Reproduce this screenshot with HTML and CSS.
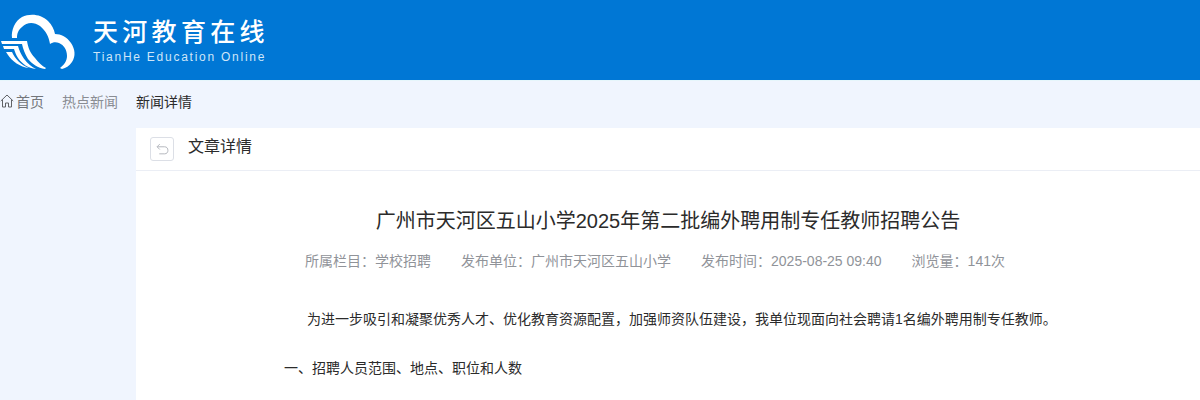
FILE: index.html
```html
<!DOCTYPE html>
<html lang="zh-CN">
<head>
    <meta charset="UTF-8">
    <title>新闻详情</title>
    <link rel="stylesheet" href="styles.css">
</head>
<body>
    <header class="site-header">
        <div class="logo">
            <svg class="logo-mark" width="76" height="64" viewBox="0 10 76 64">
                <path fill="#fff" d="M12 38C11 30 15 21 22 17C30 13 41 14 48 21C52 25 54 29 55 34C61 34 67 37 71 43C75 49 76 56 72 62C69 66 66 68 62 69L60 68C64 65 67 61 67 56C67 50 64 45 59 43C56 42 53 42 50 44C49 37 46 31 40 26C34 22 27 22 22 27C18 30 17 34 17 38Z"/>
                <path fill="#fff" d="M1 41H27C28 47 30 53 35 58C38 62 42 66 46 68L45 69C38 68 32 64 28 59C25 54 23 49 22 44H2Z"/>
                <path fill="#fff" d="M3 46H18C20 54 26 64 36 69C28 68 22 64 18 58C16 55 15 52 14 49H4Z"/>
                <path fill="#fff" d="M6 52H12C15 59 21 65 29 68C20 67 12 61 8 55Z"/>
            </svg>
            <div class="logo-text">
                <div class="logo-cn">天河教育在线</div>
                <div class="logo-en">TianHe Education Online</div>
            </div>
        </div>
    </header>

    <nav class="crumbs">
        <svg class="home-icon" width="14" height="14" viewBox="0 0 14 14">
            <path fill="none" stroke="#606266" stroke-width="1" d="M0.8 7L7 1L13.2 7M2.5 5.5V13H5.5V9H8.5V13H11.5V5.5"/>
        </svg>
        <span class="crumb first">首页</span>
        <span class="crumb">热点新闻</span>
        <span class="crumb current">新闻详情</span>
    </nav>

    <div class="page">
        <main class="panel">
            <div class="panel-head">
                <button class="back-btn">
                    <svg width="13" height="13" viewBox="0 0 12 12">
                        <path fill="none" stroke="#b4b7bd" stroke-width="0.9" d="M3.5 1L1 3.5L3.5 6M1 3.5H8C10 3.5 11 5 11 6.8C11 8.6 10 10 8 10H3"/>
                    </svg>
                </button>
                <span class="panel-title">文章详情</span>
            </div>
            <article class="article">
                <h1 class="article-title">广州市天河区五山小学2025年第二批编外聘用制专任教师招聘公告</h1>
                <div class="meta">
                    <span>所属栏目：学校招聘</span>
                    <span>发布单位：广州市天河区五山小学</span>
                    <span>发布时间：2025-08-25 09:40</span>
                    <span>浏览量：141次</span>
                </div>
                <div class="article-body">
                    <p class="intro">为进一步吸引和凝聚优秀人才、优化教育资源配置，加强师资队伍建设，我单位现面向社会聘请1名编外聘用制专任教师。</p>
                    <p class="section">一、招聘人员范围、地点、职位和人数</p>
                </div>
            </article>
        </main>
    </div>
</body>
</html>
```

FILE: styles.css
```css
/* 基础 */
html, body { height: 100%; overflow: hidden; }
body {
    margin: 0;
    background: #f0f5fe;
    font-family: "Liberation Sans", "Noto Sans CJK SC", sans-serif;
    color: #2b2b2b;
}

/* 顶部 */
.site-header {
    height: 81px;
    background: #0077d5;
    border-bottom: 1px solid #e6f6fb;
    box-sizing: border-box;
}

.logo {
    display: flex;
    align-items: center;
    height: 80px;
}

.logo-mark { margin: 4px 17px 0 0; flex: none; }

.logo-text { color: #fff; }

.logo-cn {
    font-size: 25px;
    line-height: 32px;
    letter-spacing: 4.3px;
    font-weight: 500;
}

.logo-en {
    margin-top: 2px;
    font-size: 12px;
    line-height: 14px;
    letter-spacing: 1.75px;
    color: #cfe6f8;
}

/* 面包屑 */
.crumbs {
    display: flex;
    align-items: center;
    height: 40px;
    padding-bottom: 7px;
    font-size: 14px;
}

.home-icon { flex: none; margin-right: 2px; }

.crumb { color: #8a8d93; margin-right: 18px; }
.crumb.first { color: #73767a; }
.crumb.current { color: #2b2b2b; }

/* 内容 */
.page { padding-left: 136px; }

.panel { background: #fff; min-height: 272px; }

.panel-head {
    display: flex;
    align-items: center;
    height: 42px;
    padding-left: 14px;
    border-bottom: 1px solid #ebeef5;
}

.back-btn {
    display: flex;
    align-items: center;
    justify-content: center;
    width: 24px;
    height: 24px;
    padding: 0;
    background: #fff;
    border: 1px solid #dcdfe6;
    border-radius: 3px;
}

.panel-title {
    margin: 0 0 8px 14px;
    font-size: 16px;
}

.article { padding-top: 36px; }

.article-title {
    margin: 0;
    font-size: 20px;
    font-weight: 400;
    line-height: 28px;
    text-align: center;
}

.meta {
    display: flex;
    justify-content: center;
    gap: 30px;
    margin-top: 16px;
    padding-right: 26px;
    font-size: 14px;
    line-height: 20px;
    color: #909399;
}

.article-body {
    margin-top: 38px;
    padding-left: 148px;
    font-size: 14px;
    line-height: 20px;
}

.article-body p { margin: 0; }
.article-body .intro { text-indent: 23px; }
.article-body .section { margin-top: 29px; }
```
